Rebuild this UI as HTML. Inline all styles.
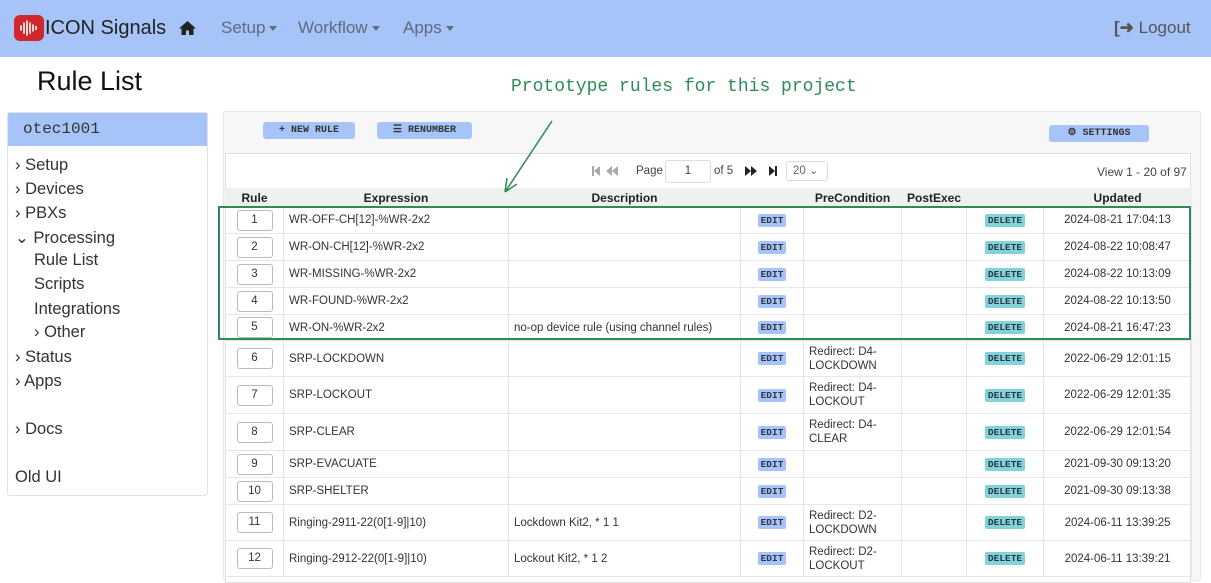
<!DOCTYPE html>
<html><head><meta charset="utf-8"><style>
*{box-sizing:border-box;margin:0;padding:0}
body{width:1211px;height:575px;overflow:hidden;background:#fff;font-family:"Liberation Sans",sans-serif;position:relative;color:#222}
.nav{position:absolute;left:0;top:0;width:1211px;height:57px;background:#a6c4f7}
.abs{position:absolute;white-space:nowrap}
.navl{font-size:17px;color:#5f6b7e;top:18px}
.car{display:inline-block;border-left:4px solid transparent;border-right:4px solid transparent;border-top:5px solid #5f6b7e;vertical-align:middle;margin-left:4px}
.side{position:absolute;left:7px;top:112px;width:201px;height:384px;border:1px solid #e2e2e2;border-radius:3px}
.side .hd{height:33px;background:#a6c4f7;font-family:"Liberation Mono",monospace;font-size:16px;padding:7px 0 0 15px;color:#333}
.si{position:absolute;font-size:16.5px;color:#333}
.panel{position:absolute;left:223px;top:111px;width:978px;height:470px;background:#f7f7f7;border:1px solid #e6e6e6;border-radius:3px}
.btn{position:absolute;background:#a6c4f7;border-radius:3px;font-family:"Liberation Mono",monospace;font-size:10px;font-weight:bold;color:#333;height:17px;line-height:17px;text-align:center}
.grid{position:absolute;left:225px;top:153px;width:966px;height:430px;background:#fff;border:1px solid #e0e0e0}
table{position:absolute;left:225px;top:188px;border-collapse:collapse;font-size:11.5px;color:#333;table-layout:fixed}
td,th{border:1px solid #e6e6e6;padding:0 5px;overflow:hidden;white-space:nowrap}
th{height:18px;background:#f0f0f0;font-size:12px;color:#222;border-color:#f0f0f0}
td.n{text-align:center}
.nb{display:inline-block;width:36px;height:21px;border:1px solid #bbb;border-radius:3px;line-height:19px;text-align:center;font-size:11.5px}
.e{display:inline-block;background:#a6c4f7;font-family:"Liberation Mono",monospace;font-size:9.5px;font-weight:bold;padding:1px 3px;border-radius:2px;color:#334}
.d{display:inline-block;background:#7fd3d9;font-family:"Liberation Mono",monospace;font-size:9.5px;font-weight:bold;padding:1px 3px;border-radius:2px;color:#334}
.pc{white-space:normal;line-height:14px;font-size:11.5px}
</style></head><body>
<div class="nav"></div>
<svg class="abs" style="left:14px;top:15px" width="30" height="26" viewBox="0 0 30 26"><rect x="0" y="0" width="30" height="26" rx="6" fill="#d0262c"/><g stroke="#fff" stroke-width="1.6" stroke-linecap="round"><line x1="7" y1="11" x2="7" y2="15"/><line x1="10" y1="8" x2="10" y2="18"/><line x1="13" y1="6" x2="13" y2="20"/><line x1="16" y1="8" x2="16" y2="18"/><line x1="19" y1="10" x2="19" y2="16"/><line x1="22" y1="11.5" x2="22" y2="14.5"/></g></svg>
<div class="abs" style="left:45px;top:17px;font-size:20px;color:#222">ICON Signals</div>
<svg class="abs" style="left:178px;top:20px" width="19" height="16" viewBox="0 0 19 16"><path d="M9.5 1L1 8.5h2.5V15h4.5v-4.5h3V15h4.5V8.5H18z" fill="#222"/></svg>
<div class="abs navl" style="left:221px">Setup<span class="car"></span></div>
<div class="abs navl" style="left:298px">Workflow<span class="car"></span></div>
<div class="abs navl" style="left:403px">Apps<span class="car"></span></div>
<div class="abs navl" style="left:1114px;color:#555"><span style="font-weight:bold">[&#x279C;</span> Logout</div>
<div class="abs" style="left:37px;top:66px;font-size:27px;color:#111">Rule List</div>
<div class="abs" style="left:511px;top:77px;font-family:'Liberation Mono',monospace;font-size:18px;color:#2e8b57">Prototype rules for this project</div>
<div class="side"><div class="hd">otec1001</div></div>
<div class="si" style="left:15px;top:156px">&#x203A; Setup</div>
<div class="si" style="left:15px;top:180px">&#x203A; Devices</div>
<div class="si" style="left:15px;top:204px">&#x203A; PBXs</div>
<div class="si" style="left:15px;top:228px">&#x2304; Processing</div>
<div class="si" style="left:34px;top:251px">Rule List</div>
<div class="si" style="left:34px;top:275px">Scripts</div>
<div class="si" style="left:34px;top:300px">Integrations</div>
<div class="si" style="left:34px;top:323px">&#x203A; Other</div>
<div class="si" style="left:15px;top:348px">&#x203A; Status</div>
<div class="si" style="left:15px;top:372px">&#x203A; Apps</div>
<div class="si" style="left:15px;top:420px">&#x203A; Docs</div>
<div class="si" style="left:15px;top:468px">Old UI</div>
<div class="panel"></div>
<div class="btn" style="left:263px;top:122px;width:92px;line-height:18px">+ NEW RULE</div>
<div class="btn" style="left:377px;top:122px;width:95px;line-height:18px">&#x2630; RENUMBER</div>
<div class="btn" style="left:1049px;top:125px;width:100px;line-height:18px">&#x2699; SETTINGS</div>
<div class="grid"></div>
<svg class="abs" style="left:592px;top:166px" width="34" height="10" viewBox="0 0 34 10"><g fill="#aaa"><rect x="0" y="0" width="2" height="10"/><path d="M2 5L8 0V10z"/><path d="M20 0L14 5L20 10zM26 0L20 5L26 10z"/></g></svg>
<div class="abs" style="left:636px;top:165px;font-size:11.5px;color:#444">Page</div>
<div class="abs" style="left:665px;top:160px;width:46px;height:23px;border:1px solid #ddd;border-radius:3px;text-align:center;line-height:21px;font-size:11.5px;color:#444">1</div>
<div class="abs" style="left:714px;top:165px;font-size:11.5px;color:#444">of 5</div>
<svg class="abs" style="left:745px;top:166px" width="36" height="10" viewBox="0 0 36 10"><g fill="#222"><path d="M0 0L6 5L0 10zM6 0L12 5L6 10z"/><path d="M24 0L30 5L24 10z"/><rect x="30" y="0" width="2" height="10"/></g></svg>
<div class="abs" style="left:786px;top:161px;width:42px;height:20px;border:1px solid #ddd;border-radius:3px;padding-left:6px;line-height:18px;font-size:11.5px;color:#666">20 &#x2304;</div>
<div class="abs" style="left:1097px;top:165px;font-size:12px;color:#444">View 1 - 20 of 97</div>
<table>
<colgroup><col style="width:58px"><col style="width:225px"><col style="width:232px"><col style="width:63px"><col style="width:98px"><col style="width:64px"><col style="width:77px"><col style="width:148px"></colgroup>
<tr><th>Rule</th><th>Expression</th><th>Description</th><th></th><th>PreCondition</th><th>PostExec</th><th></th><th>Updated</th></tr>
<tr style="height:27px"><td class="n"><span class="nb">1</span></td><td>WR-OFF-CH[12]-%WR-2x2</td><td></td><td class="n"><span class="e">EDIT</span></td><td></td><td></td><td class="n"><span class="d">DELETE</span></td><td class="n">2024-08-21 17:04:13</td></tr>
<tr style="height:27px"><td class="n"><span class="nb">2</span></td><td>WR-ON-CH[12]-%WR-2x2</td><td></td><td class="n"><span class="e">EDIT</span></td><td></td><td></td><td class="n"><span class="d">DELETE</span></td><td class="n">2024-08-22 10:08:47</td></tr>
<tr style="height:27px"><td class="n"><span class="nb">3</span></td><td>WR-MISSING-%WR-2x2</td><td></td><td class="n"><span class="e">EDIT</span></td><td></td><td></td><td class="n"><span class="d">DELETE</span></td><td class="n">2024-08-22 10:13:09</td></tr>
<tr style="height:27px"><td class="n"><span class="nb">4</span></td><td>WR-FOUND-%WR-2x2</td><td></td><td class="n"><span class="e">EDIT</span></td><td></td><td></td><td class="n"><span class="d">DELETE</span></td><td class="n">2024-08-22 10:13:50</td></tr>
<tr style="height:26px"><td class="n"><span class="nb">5</span></td><td>WR-ON-%WR-2x2</td><td>no-op device rule (using channel rules)</td><td class="n"><span class="e">EDIT</span></td><td></td><td></td><td class="n"><span class="d">DELETE</span></td><td class="n">2024-08-21 16:47:23</td></tr>
<tr style="height:36px"><td class="n"><span class="nb">6</span></td><td>SRP-LOCKDOWN</td><td></td><td class="n"><span class="e">EDIT</span></td><td class="pc">Redirect: D4-<br>LOCKDOWN</td><td></td><td class="n"><span class="d">DELETE</span></td><td class="n">2022-06-29 12:01:15</td></tr>
<tr style="height:37px"><td class="n"><span class="nb">7</span></td><td>SRP-LOCKOUT</td><td></td><td class="n"><span class="e">EDIT</span></td><td class="pc">Redirect: D4-<br>LOCKOUT</td><td></td><td class="n"><span class="d">DELETE</span></td><td class="n">2022-06-29 12:01:35</td></tr>
<tr style="height:37px"><td class="n"><span class="nb">8</span></td><td>SRP-CLEAR</td><td></td><td class="n"><span class="e">EDIT</span></td><td class="pc">Redirect: D4-<br>CLEAR</td><td></td><td class="n"><span class="d">DELETE</span></td><td class="n">2022-06-29 12:01:54</td></tr>
<tr style="height:27px"><td class="n"><span class="nb">9</span></td><td>SRP-EVACUATE</td><td></td><td class="n"><span class="e">EDIT</span></td><td></td><td></td><td class="n"><span class="d">DELETE</span></td><td class="n">2021-09-30 09:13:20</td></tr>
<tr style="height:27px"><td class="n"><span class="nb">10</span></td><td>SRP-SHELTER</td><td></td><td class="n"><span class="e">EDIT</span></td><td></td><td></td><td class="n"><span class="d">DELETE</span></td><td class="n">2021-09-30 09:13:38</td></tr>
<tr style="height:36px"><td class="n"><span class="nb">11</span></td><td>Ringing-2911-22(0[1-9]|10)</td><td>Lockdown Kit2, * 1 1</td><td class="n"><span class="e">EDIT</span></td><td class="pc">Redirect: D2-<br>LOCKDOWN</td><td></td><td class="n"><span class="d">DELETE</span></td><td class="n">2024-06-11 13:39:25</td></tr>
<tr style="height:36px"><td class="n"><span class="nb">12</span></td><td>Ringing-2912-22(0[1-9]|10)</td><td>Lockout Kit2, * 1 2</td><td class="n"><span class="e">EDIT</span></td><td class="pc">Redirect: D2-<br>LOCKOUT</td><td></td><td class="n"><span class="d">DELETE</span></td><td class="n">2024-06-11 13:39:21</td></tr>
</table>
<div class="abs" style="left:218px;top:206px;width:973px;height:134px;border:2px solid #2e8b57"></div>
<svg class="abs" style="left:500px;top:118px" width="60" height="80" viewBox="0 0 60 80"><path d="M52 3L5 74M5 74L7 60M5 74L17 66" stroke="#2e8b57" stroke-width="1.5" fill="none"/></svg>
</body></html>
